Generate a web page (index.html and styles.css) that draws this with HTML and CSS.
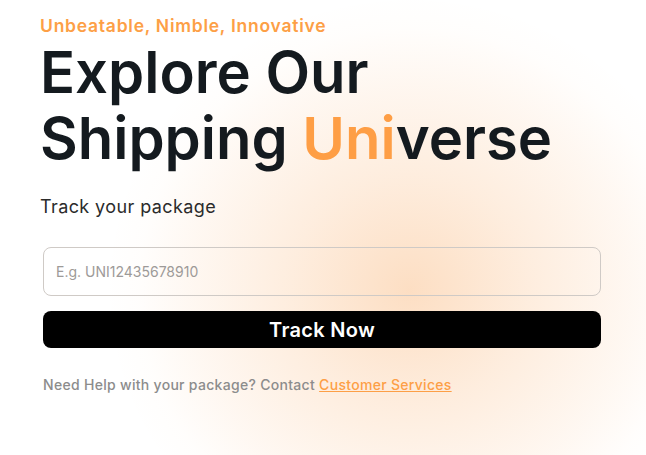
FILE: index.html
```html
<!DOCTYPE html>
<html lang="en">
<head>
<meta charset="utf-8">
<title>Track your package</title>
<link rel="stylesheet" href="styles.css">
</head>
<body>
<main class="hero">
  <div class="glow"></div>
  <section class="content">
    <p class="tagline">Unbeatable, Nimble, Innovative</p>
    <h1 class="title">Explore Our<br>Shipping <span class="accent">Uni</span>verse</h1>
    <p class="subtitle">Track your package</p>
    <form class="track-form">
      <input class="track-input" type="text" placeholder="E.g. UNI12435678910">
      <button class="track-btn" type="button">Track Now</button>
    </form>
    <p class="help">Need Help with your package? Contact <a class="help-link" href="#">Customer Services</a></p>
  </section>
</main>
</body>
</html>
```

FILE: styles.css
```css
* { box-sizing: border-box; }
html, body {
  margin: 0;
  padding: 0;
  height: 100%;
  background: #ffffff;
  font-family: "Inter", "Open Sans", sans-serif;
  overflow: hidden;
}
.hero {
  position: relative;
  width: 646px;
  height: 455px;
  overflow: hidden;
  background: #ffffff;
}
.glow {
  position: absolute;
  left: 110px;
  top: 0px;
  width: 600px;
  height: 580px;
  border-radius: 50%;
  background: radial-gradient(ellipse at 50% 50%, rgba(252, 214, 180, 0.8) 0%, rgba(253, 224, 198, 0.58) 28%, rgba(254, 236, 220, 0.38) 52%, rgba(255, 245, 236, 0.15) 64%, rgba(255, 255, 255, 0) 72%);
  pointer-events: none;
}
.content {
  position: relative;
  padding: 15px 0 0 40px;
}
.tagline {
  margin: 0;
  font-size: 17.5px;
  font-weight: 600;
  letter-spacing: 0.75px;
  color: #fd9f46;
  line-height: 22px;
}
.title {
  margin: 2px 0 0;
  font-size: 58px;
  font-weight: 600;
  line-height: 66px;
  letter-spacing: 0px;
  color: #141a1f;
}
.accent { color: #fe9e45; }
.subtitle {
  margin: 24px 0 0;
  font-size: 18px;
  font-weight: 400;
  letter-spacing: 0.4px;
  color: #2b2b2b;
  line-height: 24px;
}
.track-form {
  margin: 28px 0 0 3px;
  width: 558px;
  display: flex;
  flex-direction: column;
  gap: 15px;
}
.track-input {
  height: 49px;
  border: 1px solid #cfcac6;
  border-radius: 8px;
  background: transparent;
  padding: 0 12px;
  font-family: inherit;
  font-size: 14px;
  color: #333;
  outline: none;
}
.track-input::placeholder { color: #9d9a98; }
.track-btn {
  height: 37px;
  border: none;
  border-radius: 8px;
  background: #000;
  color: #fff;
  font-family: inherit;
  font-size: 20px;
  font-weight: 600;
  letter-spacing: 0.3px;
  cursor: pointer;
}
.help {
  margin: 28px 0 0 3px;
  font-size: 14px;
  font-weight: 500;
  letter-spacing: 0.3px;
  color: #8c8c8c;
}
.help-link {
  color: #fd9f46;
  text-decoration: underline;
}
```
